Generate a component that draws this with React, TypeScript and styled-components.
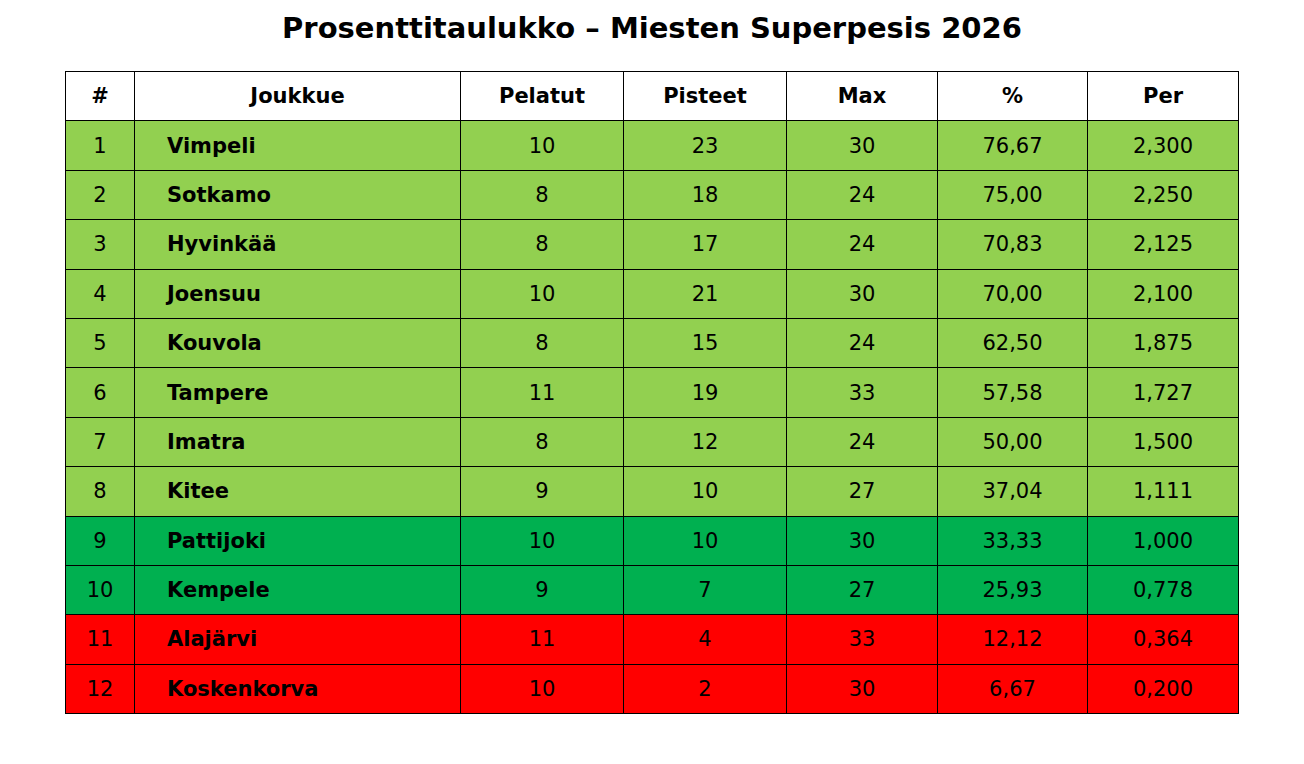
import styled, { createGlobalStyle } from "styled-components";

const GlobalStyle = createGlobalStyle`
  html, body {
    margin: 0;
    padding: 0;
    background: #ffffff;
  }
  body {
    font-family: "DejaVu Sans", "Liberation Sans", sans-serif;
    color: #000;
  }
`;

type Tier = "top" | "mid" | "low";

interface Row {
  team: string;
  played: number;
  points: number;
  max: number;
  pct: string;
  per: string;
  tier: Tier;
}

const rows: Row[] = [
  { team: "Vimpeli", played: 10, points: 23, max: 30, pct: "76,67", per: "2,300", tier: "top" },
  { team: "Sotkamo", played: 8, points: 18, max: 24, pct: "75,00", per: "2,250", tier: "top" },
  { team: "Hyvinkää", played: 8, points: 17, max: 24, pct: "70,83", per: "2,125", tier: "top" },
  { team: "Joensuu", played: 10, points: 21, max: 30, pct: "70,00", per: "2,100", tier: "top" },
  { team: "Kouvola", played: 8, points: 15, max: 24, pct: "62,50", per: "1,875", tier: "top" },
  { team: "Tampere", played: 11, points: 19, max: 33, pct: "57,58", per: "1,727", tier: "top" },
  { team: "Imatra", played: 8, points: 12, max: 24, pct: "50,00", per: "1,500", tier: "top" },
  { team: "Kitee", played: 9, points: 10, max: 27, pct: "37,04", per: "1,111", tier: "top" },
  { team: "Pattijoki", played: 10, points: 10, max: 30, pct: "33,33", per: "1,000", tier: "mid" },
  { team: "Kempele", played: 9, points: 7, max: 27, pct: "25,93", per: "0,778", tier: "mid" },
  { team: "Alajärvi", played: 11, points: 4, max: 33, pct: "12,12", per: "0,364", tier: "low" },
  { team: "Koskenkorva", played: 10, points: 2, max: 30, pct: "6,67", per: "0,200", tier: "low" },
];

const tierColors: Record<Tier, string> = {
  top: "#92d050",
  mid: "#00b050",
  low: "#ff0000",
};

const colWidths = [69, 326, 163, 163, 151, 150, 151];
const headers = ["#", "Joukkue", "Pelatut", "Pisteet", "Max", "%", "Per"];

const Page = styled.div`
  display: flex;
  flex-direction: column;
  align-items: center;
  padding-top: 14px;
`;

const Title = styled.h1`
  margin: 0 0 28px 0;
  font-size: 29px;
  line-height: 29px;
  font-weight: 700;
`;

const Table = styled.table`
  border-collapse: collapse;
  table-layout: fixed;
  width: 1173px;
  font-size: 21px;
`;

const HeadCell = styled.th`
  border: 1px solid #000;
  height: 48.4px;
  padding: 0;
  font-weight: 700;
  text-align: center;
  background: #ffffff;
`;

const BodyRow = styled.tr<{ $tier: Tier }>`
  background: ${(p) => tierColors[p.$tier]};
`;

const Cell = styled.td`
  border: 1px solid #000;
  height: 48.4px;
  padding: 0;
  text-align: center;
`;

const TeamCell = styled(Cell)`
  text-align: left;
  padding-left: 32px;
  font-weight: 700;
`;

export default function App() {
  return (
    <>
      <GlobalStyle />
      <Page>
        <Title>Prosenttitaulukko – Miesten Superpesis 2026</Title>
        <Table>
          <colgroup>
            {colWidths.map((w, i) => (
              <col key={i} style={{ width: w }} />
            ))}
          </colgroup>
          <thead>
            <tr>
              {headers.map((h) => (
                <HeadCell key={h}>{h}</HeadCell>
              ))}
            </tr>
          </thead>
          <tbody>
            {rows.map((r, i) => (
              <BodyRow key={r.team} $tier={r.tier}>
                <Cell>{i + 1}</Cell>
                <TeamCell>{r.team}</TeamCell>
                <Cell>{r.played}</Cell>
                <Cell>{r.points}</Cell>
                <Cell>{r.max}</Cell>
                <Cell>{r.pct}</Cell>
                <Cell>{r.per}</Cell>
              </BodyRow>
            ))}
          </tbody>
        </Table>
      </Page>
    </>
  );
}
